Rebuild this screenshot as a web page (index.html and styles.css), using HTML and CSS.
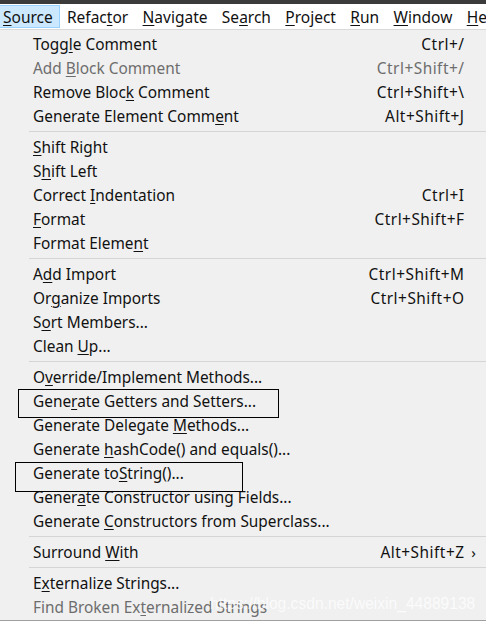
FILE: index.html
```html
<!DOCTYPE html>
<html>
<head>
<meta charset="utf-8">
<link rel="stylesheet" href="styles.css">
</head>
<body>
<div class="topbar"></div>
<div class="menubar">
  <span class="mb-item active"><u>S</u>ource</span>
  <span class="mb-item">Refac<u>t</u>or</span>
  <span class="mb-item"><u>N</u>avigate</span>
  <span class="mb-item">Se<u>a</u>rch</span>
  <span class="mb-item"><u>P</u>roject</span>
  <span class="mb-item"><u>R</u>un</span>
  <span class="mb-item"><u>W</u>indow</span>
  <span class="mb-item"><u>H</u>elp</span>
</div>
<div class="menu">
  <div class="item"><span class="label">Togg<u>l</u>e Comment</span><span class="key">Ctrl+/</span></div>
  <div class="item disabled"><span class="label">Add <u>B</u>lock Comment</span><span class="key">Ctrl+Shift+/</span></div>
  <div class="item"><span class="label">Remove Bloc<u>k</u> Comment</span><span class="key">Ctrl+Shift+\</span></div>
  <div class="item"><span class="label">Generate Element Comm<u>e</u>nt</span><span class="key">Alt+Shift+J</span></div>
  <div class="sep"></div>
  <div class="item"><span class="label"><u>S</u>hift Right</span><span class="key"></span></div>
  <div class="item"><span class="label">S<u>h</u>ift Left</span><span class="key"></span></div>
  <div class="item"><span class="label">Correct <u>I</u>ndentation</span><span class="key">Ctrl+I</span></div>
  <div class="item"><span class="label"><u>F</u>ormat</span><span class="key">Ctrl+Shift+F</span></div>
  <div class="item"><span class="label">Format Eleme<u>n</u>t</span><span class="key"></span></div>
  <div class="sep"></div>
  <div class="item"><span class="label">A<u>d</u>d Import</span><span class="key">Ctrl+Shift+M</span></div>
  <div class="item"><span class="label">Or<u>g</u>anize Imports</span><span class="key">Ctrl+Shift+O</span></div>
  <div class="item"><span class="label">S<u>o</u>rt Members...</span><span class="key"></span></div>
  <div class="item"><span class="label">Clean <u>U</u>p...</span><span class="key"></span></div>
  <div class="sep"></div>
  <div class="item"><span class="label">O<u>v</u>erride/Implement Methods...</span><span class="key"></span></div>
  <div class="item"><span class="label">Gene<u>r</u>ate Getters and Setters...</span><span class="key"></span></div>
  <div class="item"><span class="label">Generate Delegate <u>M</u>ethods...</span><span class="key"></span></div>
  <div class="item"><span class="label">Generate <u>h</u>ashCode() and equals()...</span><span class="key"></span></div>
  <div class="item"><span class="label">Generate to<u>S</u>tring()...</span><span class="key"></span></div>
  <div class="item"><span class="label">Gener<u>a</u>te Constructor using Fields...</span><span class="key"></span></div>
  <div class="item"><span class="label">Generate <u>C</u>onstructors from Superclass...</span><span class="key"></span></div>
  <div class="sep"></div>
  <div class="item sub"><span class="label">Surround <u>W</u>ith</span><span class="key">Alt+Shift+Z</span><span class="arrow">&#x203A;</span></div>
  <div class="sep"></div>
  <div class="item"><span class="label">E<u>x</u>ternalize Strings...</span><span class="key"></span></div>
  <div class="item disabled"><span class="label">Find Broken Ex<u>t</u>ernalized Strings</span><span class="key"></span></div>
  <div class="box box1"></div>
  <div class="box box2"></div>
  <div class="watermark">https://blog.csdn.net/weixin_44889138</div>
</div>
<div class="below"></div>
</body>
</html>
```

FILE: styles.css
```css
html, body {
  margin: 0;
  padding: 0;
  background: #ffffff;
  width: 486px;
  height: 624px;
  overflow: hidden;
}
body {
  font-family: "Noto Sans", "Noto Sans CJK SC", sans-serif;
  color: #111111;
}
u {
  text-decoration: underline;
  text-underline-offset: 2px;
  text-decoration-thickness: 1px;
}
.topbar {
  height: 4px;
  background: #3b3b3b;
}
.menubar {
  height: 25px;
  display: flex;
  align-items: stretch;
  background: #ffffff;
  border-bottom: 1px solid #d9d9d9;
  font-size: 15.5px;
  white-space: nowrap;
  overflow: hidden;
}
.mb-item {
  display: flex;
  align-items: center;
  padding: 0 7.2px;
  box-sizing: border-box;
  flex-shrink: 0;
}
.mb-item.active {
  padding-left: 3px;
  padding-right: 6px;
  background: #cce8ff;
  border: 1px solid #99d1ff;
  border-left: none;
  margin-top: 1px;
  margin-bottom: 1px;
}
.menu {
  position: relative;
  background: #f0f0f0;
  padding-top: 2px;
  height: 588px;
  border-bottom: 1px solid #a0a0a0;
  font-size: 15.4px;
  overflow: hidden;
}
.item {
  height: 24px;
  display: flex;
  align-items: center;
  justify-content: space-between;
  padding-left: 33px;
  padding-right: 22px;
  white-space: nowrap;
  position: relative;
}
.key {
  letter-spacing: 0.5px;
  margin-right: -0.5px;
}
.item.disabled {
  color: #6d6d6d;
}
.arrow {
  position: absolute;
  right: 10px;
  top: 2px;
  font-size: 15px;
}
.sep {
  height: 1px;
  margin: 3px 0 3px 29px;
  background: #d5d5d5;
}
.box {
  position: absolute;
  border: 1px solid #000000;
  box-sizing: border-box;
}
.box1 {
  left: 18px;
  top: 359px;
  width: 261px;
  height: 29px;
}
.box2 {
  left: 15px;
  top: 432px;
  width: 228px;
  height: 30px;
}
.watermark {
  position: absolute;
  left: 210px;
  top: 565px;
  font-family: "Liberation Sans", Arial, sans-serif;
  font-size: 15.6px;
  white-space: nowrap;
  color: rgba(255, 255, 255, 0.75);
}
.below {
  height: 10px;
  background: #ffffff;
}
```
